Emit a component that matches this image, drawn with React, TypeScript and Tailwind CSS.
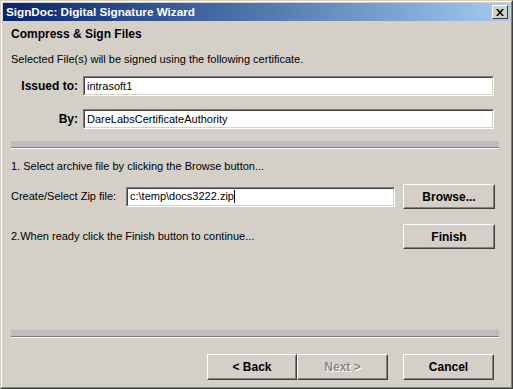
import React from 'react'

const font = { fontFamily: '"Liberation Sans", Arial, sans-serif' }

const Field = ({ value, className = '', caret = false }: { value: string; className?: string; caret?: boolean }) => (
  <div className={`border border-t-[#808080] border-l-[#808080] border-b-white border-r-white ${className}`}>
    <div className="h-full border border-t-[#404040] border-l-[#404040] border-b-[#d4d0c8] border-r-[#d4d0c8] bg-white flex items-center pl-[2px] text-[11px] text-black">
      <span>{value}</span>
      {caret && <span className="w-px h-[13px] bg-black" />}
    </div>
  </div>
)

const Button = ({ label, disabled = false, className = '' }: { label: string; disabled?: boolean; className?: string }) => (
  <div className={`border border-t-white border-l-white border-b-[#404040] border-r-[#404040] ${className}`}>
    <div className="h-full border border-t-[#d4d0c8] border-l-[#d4d0c8] border-b-[#808080] border-r-[#808080] bg-[#d4d0c8] flex items-center justify-center">
      <span
        className={`text-[12px] font-bold ${disabled ? 'text-[#8a8a8a] [text-shadow:1px_1px_0_#fff]' : 'text-black'}`}
      >
        {label}
      </span>
    </div>
  </div>
)

const Separator = ({ className = '' }: { className?: string }) => (
  <div className={`mx-2 ${className}`}>
    <div className="h-[6px] bg-[#bdbdbf]" />
    <div className="h-px bg-[#7c7c7c]" />
    <div className="h-px bg-white" />
  </div>
)

export default function App() {
  return (
    <div
      className="w-[513px] h-[389px] bg-[#d4d0c8] border border-t-[#d4d0c8] border-l-[#d4d0c8] border-b-[#404040] border-r-[#404040]"
      style={font}
    >
      <div className="h-full border border-t-white border-l-white border-b-[#808080] border-r-[#808080] p-px flex flex-col">
        {/* Title bar */}
        <div className="h-[18px] bg-gradient-to-r from-[#0a246a] to-[#a6caf0] flex items-center justify-between pl-[3px] pr-[2px]">
          <span className="text-white font-bold text-[11.7px] leading-none">SignDoc: Digital Signature Wizard</span>
          <div className="w-[16px] h-[14px] border border-t-white border-l-white border-b-[#404040] border-r-[#404040] bg-[#d4d0c8] flex items-center justify-center">
            <svg width="8" height="7" viewBox="0 0 8 7">
              <path d="M0 0h2l2 2.5L6 0h2L5 3.5L8 7H6L4 4.5L2 7H0l3-3.5z" fill="#000" />
            </svg>
          </div>
        </div>

        {/* Body */}
        <div className="flex-1 flex flex-col text-black">
          <div className="mt-[5px] pl-2 h-[16px] flex items-center text-[12px] font-bold">Compress &amp; Sign Files</div>
          <div className="mt-[11px] pl-2 h-[13px] flex items-center text-[11px]">
            Selected File(s) will be signed using the following certificate.
          </div>

          <div className="mt-[10px] flex items-center h-[20px]">
            <div className="w-[75px] text-right text-[12px] font-bold">Issued to:</div>
            <Field value="intrasoft1" className="ml-[5px] w-[411px] h-[20px]" />
          </div>
          <div className="mt-[13px] flex items-center h-[20px]">
            <div className="w-[75px] text-right text-[12px] font-bold">By:</div>
            <Field value="DareLabsCertificateAuthority" className="ml-[5px] w-[411px] h-[20px]" />
          </div>

          <Separator className="mt-[12px] mr-[11px]" />

          <div className="mt-[11px] pl-2 h-[13px] flex items-center text-[11px]">
            1. Select archive file by clicking the Browse button...
          </div>

          <div className="mt-[11px] flex items-center h-[25px]">
            <div className="pl-2 w-[123px] text-[11px]">Create/Select Zip file:</div>
            <Field value="c:\temp\docs3222.zip" caret className="w-[269px] h-[20px]" />
            <Button label="Browse..." className="ml-[8px] w-[92px] h-[25px]" />
          </div>

          <div className="mt-[15px] flex items-center h-[25px]">
            <div className="pl-2 w-[400px] text-[11px]">2.When ready click the Finish button to continue...</div>
            <Button label="Finish" className="w-[92px] h-[25px]" />
          </div>

          <div className="flex-1" />

          <Separator className="mr-[11px]" />

          <div className="mt-[16px] mb-[6px] flex items-center">
            <div className="ml-[204px] flex">
              <Button label="< Back" className="w-[90px] h-[26px]" />
              <Button label="Next >" disabled className="w-[91px] h-[26px]" />
            </div>
            <Button label="Cancel" className="ml-[15px] w-[91px] h-[26px]" />
          </div>
        </div>
      </div>
    </div>
  )
}
